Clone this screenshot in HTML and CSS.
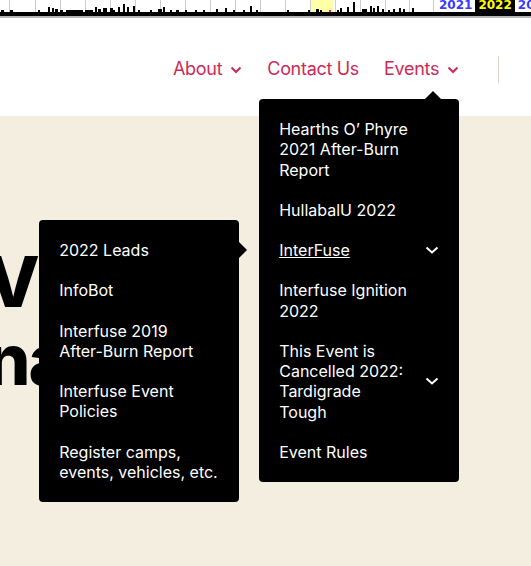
FILE: index.html
```html
<!DOCTYPE html>
<html lang="en">
<head>
  <meta charset="UTF-8">
  <meta name="viewport" content="width=device-width, initial-scale=1.0">
  <title>Events</title>
  <link rel="stylesheet" href="styles.css">
</head>
<body>
  <!-- capture timeline strip -->
  <div class="timeline">
    <div class="timeline-row">
      <svg class="sparkline" width="435" height="12" viewBox="0 0 435 12">
        <rect x="310" y="0" width="23" height="12" fill="#ffffa8"/>
        <g fill="#ccc">
          <rect x="9" y="0" width="1" height="12"/><rect x="35" y="0" width="1" height="12"/>
          <rect x="60" y="0" width="1" height="12"/><rect x="85" y="0" width="1" height="12"/>
          <rect x="110" y="0" width="1" height="12"/><rect x="135" y="0" width="1" height="12"/>
          <rect x="160" y="0" width="1" height="12"/><rect x="185" y="0" width="1" height="12"/>
          <rect x="210" y="0" width="1" height="12"/><rect x="235" y="0" width="1" height="12"/>
          <rect x="260" y="0" width="1" height="12"/><rect x="285" y="0" width="1" height="12"/>
          <rect x="310" y="0" width="1" height="12"/><rect x="335" y="0" width="1" height="12"/>
          <rect x="360" y="0" width="1" height="12"/><rect x="385" y="0" width="1" height="12"/>
          <rect x="409" y="0" width="1" height="12"/><rect x="433" y="0" width="1" height="12"/>
        </g>
        <g fill="#000">
          <rect x="1" y="10" width="3" height="2"/><rect x="10" y="10" width="3" height="2"/>
          <rect x="38" y="10" width="2" height="2"/><rect x="48" y="7" width="2" height="5"/>
          <rect x="52" y="8" width="2" height="4"/><rect x="55" y="9" width="3" height="3"/>
          <rect x="60" y="10" width="3" height="2"/><rect x="66" y="10" width="17" height="2"/>
          <rect x="85" y="10" width="8" height="2"/><rect x="95" y="7" width="2" height="5"/>
          <rect x="98" y="9" width="3" height="3"/><rect x="103" y="8" width="4" height="4"/>
          <rect x="110" y="8" width="3" height="4"/><rect x="113" y="10" width="2" height="2"/>
          <rect x="118" y="7" width="2" height="5"/><rect x="123" y="4" width="2" height="8"/>
          <rect x="127" y="7" width="2" height="5"/><rect x="133" y="6" width="2" height="6"/>
          <rect x="138" y="10" width="2" height="2"/><rect x="150" y="10" width="2" height="2"/>
          <rect x="158" y="9" width="4" height="3"/><rect x="163" y="7" width="2" height="5"/>
          <rect x="170" y="10" width="2" height="2"/><rect x="176" y="10" width="3" height="2"/>
          <rect x="185" y="10" width="2" height="2"/><rect x="195" y="10" width="2" height="2"/>
          <rect x="203" y="10" width="2" height="2"/><rect x="216" y="9" width="2" height="3"/>
          <rect x="225" y="8" width="2" height="4"/><rect x="233" y="10" width="2" height="2"/>
          <rect x="243" y="10" width="2" height="2"/><rect x="250" y="6" width="2" height="6"/>
          <rect x="256" y="10" width="2" height="2"/><rect x="287" y="10" width="2" height="2"/>
          <rect x="308" y="10" width="2" height="2"/><rect x="316" y="9" width="3" height="3"/>
          <rect x="320" y="10" width="2" height="2"/><rect x="337" y="10" width="2" height="2"/>
          <rect x="340" y="8" width="2" height="4"/><rect x="347" y="7" width="2" height="5"/>
          <rect x="353" y="2" width="2" height="10"/><rect x="362" y="9" width="5" height="3"/>
          <rect x="370" y="6" width="2" height="6"/><rect x="373" y="8" width="2" height="4"/>
          <rect x="377" y="6" width="2" height="6"/><rect x="382" y="9" width="2" height="3"/>
          <rect x="388" y="10" width="2" height="2"/><rect x="393" y="9" width="2" height="3"/>
          <rect x="399" y="8" width="2" height="4"/><rect x="403" y="9" width="2" height="3"/>
          <rect x="412" y="8" width="2" height="4"/>
        </g>
        <rect x="329" y="10" width="2" height="2" fill="#e0207a"/>
      </svg>
      <div class="years">
        <span class="year">2021</span>
        <span class="year current">2022</span>
        <span class="year">2023</span>
      </div>
    </div>
    <div class="timeline-bar"></div>
  </div>

  <header class="site-header">
    <nav>
      <ul class="nav">
        <li class="nav-item">About
          <svg class="caret" width="12" height="8" viewBox="0 0 12 8"><polyline points="1.5,1.5 6,6 10.5,1.5"/></svg>
        </li>
        <li class="nav-item">Contact Us</li>
        <li class="nav-item has-menu">Events
          <svg class="caret" width="12" height="8" viewBox="0 0 12 8"><polyline points="1.5,1.5 6,6 10.5,1.5"/></svg>

          <!-- Events dropdown -->
          <ul class="menu">
            <li class="menu-item">Hearths O’ Phyre 2021 <span class="nowrap">After-Burn</span> Report</li>
            <li class="menu-item">HullabalU 2022</li>
            <li class="menu-item has-sub">
              <span class="menu-text"><u>InterFuse</u></span>
              <svg class="menu-caret" width="14" height="8" viewBox="0 0 14 8"><polyline points="1.5,1.5 7,6.5 12.5,1.5"/></svg>
              <ul class="menu submenu">
                <li class="menu-item">2022 Leads</li>
                <li class="menu-item">InfoBot</li>
                <li class="menu-item">Interfuse 2019 <span class="nowrap">After-Burn</span> Report</li>
                <li class="menu-item">Interfuse Event Policies</li>
                <li class="menu-item">Register camps, events, vehicles, etc.</li>
              </ul>
            </li>
            <li class="menu-item">Interfuse Ignition 2022</li>
            <li class="menu-item has-sub">
              <span class="menu-text">This Event is Cancelled 2022: Tardigrade Tough</span>
              <svg class="menu-caret" width="14" height="8" viewBox="0 0 14 8"><polyline points="1.5,1.5 7,6.5 12.5,1.5"/></svg>
            </li>
            <li class="menu-item">Event Rules</li>
          </ul>
        </li>
      </ul>
    </nav>
    <div class="divider"></div>
  </header>

  <main class="hero">
    <h1 class="hero-title">Visit<br>nation</h1>
  </main>
</body>
</html>
```

FILE: styles.css
```css
* {
  box-sizing: border-box;
}
body {
  margin: 0;
  font-family: Inter, "Noto Sans", sans-serif;
  background-color: #f4eee0;
  overflow: hidden;
  height: 566px;
}
ul {
  list-style: none;
  margin: 0;
  padding: 0;
}
.nowrap {
  white-space: nowrap;
}

/* timeline strip */
.timeline {
  background-color: #fff;
}
.timeline-row {
  display: flex;
  height: 12px;
  overflow: hidden;
}
.sparkline {
  display: block;
  flex: none;
}
.years {
  display: flex;
  font-family: "DejaVu Sans", sans-serif;
  font-weight: bold;
  font-size: 12px;
  line-height: 10px;
  margin-left: 1px;
}
.year {
  color: #3a3aff;
  padding: 0 3px;
}
.year.current {
  background-color: #000;
  color: #ffff00;
}
.timeline-bar {
  height: 6px;
  background-color: #000;
  border-bottom: 2px solid #b8b8b8;
}

/* header + nav */
.site-header {
  display: flex;
  align-items: center;
  height: 98px;
  background-color: #fff;
  padding-left: 173px;
  padding-top: 4px;
  position: relative;
  z-index: 2;
}
.nav {
  display: flex;
  gap: 25px;
  font-size: 18px;
  line-height: 22px;
  color: #cd2a56;
  letter-spacing: -0.3px;
}
.nav-item {
  display: flex;
  align-items: center;
  position: relative;
}
.caret {
  margin-left: 8px;
  margin-top: 2px;
  fill: none;
  stroke: #cd2a56;
  stroke-width: 2;
}
.divider {
  width: 1px;
  height: 27px;
  background-color: #dcd5c6;
  margin-left: 39px;
}

/* dropdowns */
.menu {
  position: absolute;
  top: 41px;
  right: 0;
  width: 200px;
  padding: 10px 0;
  background-color: #000;
  border-radius: 4px;
  color: #fff;
  font-size: 16px;
  line-height: 20.25px;
  letter-spacing: 0;
}
.menu::before {
  content: "";
  position: absolute;
  top: -8px;
  right: 18px;
  border-left: 8px solid transparent;
  border-right: 8px solid transparent;
  border-bottom: 8px solid #000;
}
.menu-item {
  padding: 10px 20px;
  position: relative;
}
.menu-item.has-sub {
  display: flex;
  align-items: center;
}
.menu-text {
  flex: 1;
}
.menu-caret {
  flex: none;
  margin-left: 16px;
  fill: none;
  stroke: #fff;
  stroke-width: 2;
}
.submenu {
  top: -10px;
  right: calc(100% + 20px);
}
.submenu::before {
  top: 22px;
  right: -8px;
  border-left: 8px solid #000;
  border-top: 8px solid transparent;
  border-bottom: 8px solid transparent;
  border-right: none;
}

/* hero */
.hero {
  padding-top: 127px;
}
.hero-title {
  margin: 0 0 0 -14px;
  font-size: 70px;
  line-height: 78px;
  font-weight: 800;
  letter-spacing: -2px;
  color: #000;
}
```
